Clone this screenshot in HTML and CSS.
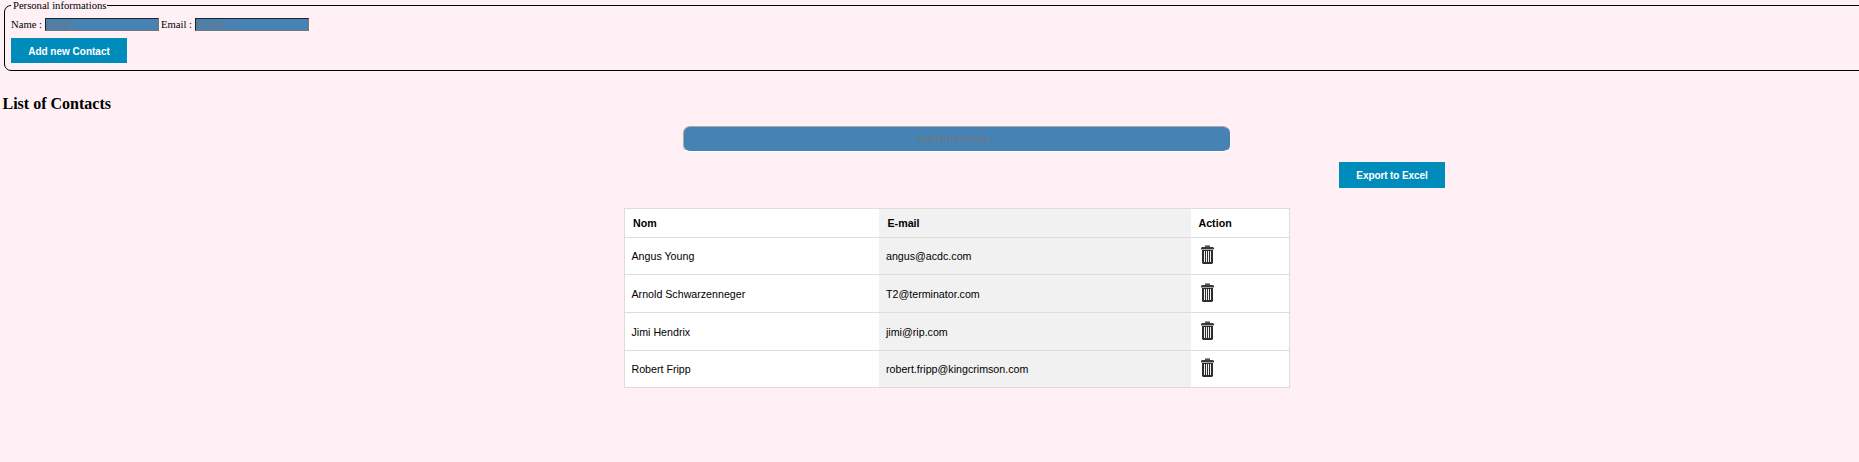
FILE: index.html
```html
<!DOCTYPE html>
<html lang="en">
<head>
<meta charset="utf-8">
<title>Contacts</title>
<link rel="stylesheet" href="styles.css">
</head>
<body>
<svg class="sprite" aria-hidden="true">
  <symbol id="trash" viewBox="0 0 13 20">
    <path fill="#999" d="M4 0h5v1H4z"/>
    <path fill="#555" d="M4 1h5v1H4z"/>
    <path fill="#3a3a3a" d="M1 2h11l1 1v1H0V3z"/>
    <path fill="#aaa" d="M0 4h13v1H0z"/>
    <path fill="#2d2d2d" d="M1 5h11v13l-1 1H2l-1-1z"/>
    <path fill="#f4f4f4" d="M3 6h1v11H3zM5 6h1v11H5zM7 6h1v11H7zM9 6h1v11H9z"/>
  </symbol>
</svg>
<fieldset class="form">
  <legend class="form-title">Personal informations</legend>
  <div class="fields">
    <label class="label-name" for="name">Name :</label>
    <input class="field" id="name" type="text" placeholder="Name...">
    <label class="label-email" for="email">Email :</label>
    <input class="field" id="email" type="text" placeholder="E-mail...">
  </div>
  <button class="button add">Add new Contact</button>
</fieldset>
<h3 class="heading">List of Contacts</h3>
<input class="search" type="text" placeholder="Search for names...">
<button class="button export">Export to Excel</button>
<table class="contacts">
  <colgroup><col class="col-name"><col class="col-mail"><col class="col-action"></colgroup>
  <thead><tr><th>Nom</th><th>E-mail</th><th>Action</th></tr></thead>
  <tbody>
    <tr><td>Angus Young</td><td>angus@acdc.com</td><td><svg class="trash"><use href="#trash"/></svg></td></tr>
    <tr><td>Arnold Schwarzenneger</td><td>T2@terminator.com</td><td><svg class="trash"><use href="#trash"/></svg></td></tr>
    <tr><td>Jimi Hendrix</td><td>jimi@rip.com</td><td><svg class="trash"><use href="#trash"/></svg></td></tr>
    <tr><td>Robert Fripp</td><td>robert.fripp@kingcrimson.com</td><td><svg class="trash"><use href="#trash"/></svg></td></tr>
  </tbody>
</table>
</body>
</html>
```
FILE: styles.css
```css
* { box-sizing: border-box; }

body {
  margin: 0;
  min-height: 462px;
  overflow: hidden;
  background: #fff0f5;
  color: #000;
  font: 10.67px/12px "Liberation Serif", "Times New Roman", serif;
}

.sprite { display: none; }

.form {
  width: 1880px;
  height: 72px;
  margin: -1px 0 0 4px;
  padding: 7px 6px 0;
  border: 1px solid #000;
  border-radius: 7px;
}

.form-title {
  height: 12px;
  padding: 0 1px 0 2px;
  letter-spacing: -0.02px;
}

.fields {
  display: flex;
  align-items: center;
  height: 13px;
  line-height: 11px;
}

.label-name { width: 34px; white-space: nowrap; }
.label-email { width: 36px; padding-left: 2px; white-space: nowrap; }

.field {
  width: 114px;
  height: 13px;
  margin: 0;
  padding: 0 1px;
  border: 1px solid;
  border-color: #222 #767676 #767676 #222;
  background: #4682b4;
  font: 9.33px "Liberation Sans", Arial, sans-serif;
}

.field::placeholder,
.search::placeholder { color: #757575; opacity: 1; }

.button {
  display: block;
  padding: 1px 0 0;
  border: 0;
  background: #008cba;
  color: #fff;
  font: bold 10px "Liberation Sans", Arial, sans-serif;
  text-align: center;
}

.add { width: 116px; height: 25px; margin-top: 7px; }

.heading {
  margin: 24px 0 0 2.5px;
  font-size: 16px;
  line-height: 18px;
}

.search {
  display: block;
  width: 547px;
  height: 26px;
  margin: 13px 0 0 683px;
  padding: 0;
  border: 1px solid;
  border-color: #aaa #4682b4 #fff #aaa;
  border-radius: 7px;
  background: #4682b4;
  font: 9px "Liberation Sans", Arial, sans-serif;
  text-align: center;
}

.export {
  width: 106px;
  height: 26px;
  margin: 10px 0 0 1339px;
  padding: 0;
  letter-spacing: -0.1px;
}

.contacts {
  width: 666px;
  margin: 20px 0 0 624px;
  border: 1px solid #ddd;
  border-collapse: collapse;
  table-layout: fixed;
  background: #fff;
  font: 10.67px/13px "Liberation Sans", Arial, sans-serif;
}

.col-name { width: 254px; }
.col-mail { width: 312px; background: #f1f1f1; }

.contacts tr { height: 38px; border-bottom: 1px solid #ddd; }
.contacts thead tr { height: 29px; }
.contacts tbody tr:first-child,
.contacts tbody tr:last-child { height: 37px; }
.contacts th { padding: 0 8px; text-align: left; }
.contacts th:nth-child(2) { padding-left: 9px; }
.contacts th:last-child { padding-left: 8px; }
.contacts td { padding: 1px 7px 0; }
.contacts td:first-child { padding-left: 6.5px; }
.contacts td:nth-child(2) { padding-left: 7.5px; }
.trash { display: block; width: 13px; height: 20px; margin: -3px 0 0 3px; }
```
